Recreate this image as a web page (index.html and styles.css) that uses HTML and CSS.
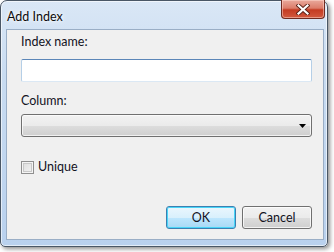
FILE: index.html
```html
<!DOCTYPE html>
<html>
<head>
<meta charset="utf-8">
<link rel="stylesheet" href="styles.css">
</head>
<body>
<div class="window">
  <div class="titlebar">
    <span class="title">Add Index</span>
    <div class="close">
      <svg width="14" height="11" viewBox="0 0 14 11">
        <path d="M2.5 1.5 L11.5 9.5 M11.5 1.5 L2.5 9.5" stroke="#5a2218" stroke-width="4" stroke-linecap="square"/>
        <path d="M2.5 1.5 L11.5 9.5 M11.5 1.5 L2.5 9.5" stroke="#ffffff" stroke-width="2.2" stroke-linecap="square"/>
      </svg>
    </div>
  </div>
  <div class="client">
    <div class="label first">Index name:</div>
    <div class="input"></div>
    <div class="label second">Column:</div>
    <div class="select">
      <svg class="arrow" width="7" height="4" viewBox="0 0 7 4"><path d="M0 0 H7 L3.5 4 Z" fill="#000"/></svg>
    </div>
    <div class="check-row">
      <span class="checkbox"></span>
      <span class="check-label">Unique</span>
    </div>
    <div class="buttons">
      <div class="btn btn-default">OK</div>
      <div class="btn">Cancel</div>
    </div>
  </div>
</div>
</body>
</html>
```
FILE: styles.css
```css
html, body {
  margin: 0;
  padding: 0;
  background: #ffffff;
}
body {
  width: 334px;
  height: 252px;
  overflow: hidden;
  font-family: Lato, "Noto Sans", sans-serif;
  font-size: 12.5px;
  color: #12121e;
}
.window {
  box-sizing: border-box;
  width: 328px;
  height: 247px;
  border: 1px solid #4a5766;
  border-radius: 7px 7px 5px 5px;
  background: linear-gradient(to bottom, #dae7f6 0%, #c9dcf1 30%, #b9d1ee 100%);
  box-shadow: 2px 2px 4px rgba(0, 0, 0, 0.45), inset 0 0 0 1px rgba(255, 255, 255, 0.6);
  display: flex;
  flex-direction: column;
}
.titlebar {
  height: 28px;
  display: flex;
  align-items: flex-start;
  padding-left: 6px;
}
.title {
  margin-top: 8px;
  line-height: 16px;
  color: #0c0c0c;
  text-shadow: 0 0 6px #ffffff, 0 0 3px #ffffff;
}
.close {
  margin-left: auto;
  margin-right: 2px;
  margin-top: -1px;
  width: 44px;
  height: 19px;
  box-sizing: border-box;
  border: 1px solid #6f2b21;
  border-top: none;
  border-radius: 0 0 4px 4px;
  background: linear-gradient(to bottom, #e9a99c 0%, #dc7d6a 45%, #c43b22 55%, #d2593f 100%);
  box-shadow: inset 0 0 0 1px rgba(255, 220, 210, 0.5);
  display: flex;
  align-items: center;
  justify-content: center;
}
.client {
  flex: 1;
  margin: 0 3px 6px 5px;
  border: 1px solid #9aaec6;
  background: #f0f0f0;
  display: flex;
  flex-direction: column;
  padding: 0 11px 10px 14px;
}
.label {
  line-height: 16px;
}
.label.first {
  margin-top: 4px;
}
.label.second {
  margin-top: 11px;
}
.input {
  margin-top: 9px;
  height: 23px;
  box-sizing: border-box;
  background: #ffffff;
  border: 1px solid #b5cfe7;
  border-top-color: #5b86b8;
  border-bottom-color: #dbe8f4;
  border-radius: 2px;
}
.select {
  margin-top: 5px;
  height: 23px;
  box-sizing: border-box;
  border: 1px solid #707070;
  border-radius: 3px;
  background: linear-gradient(to bottom, #f2f2f2 0%, #ebebeb 50%, #dddddd 51%, #cfcfcf 100%);
  box-shadow: inset 0 0 0 1px rgba(255, 255, 255, 0.7);
  display: flex;
  align-items: center;
  justify-content: flex-end;
  padding-right: 5px;
}
.check-row {
  margin-top: 22px;
  display: flex;
  align-items: center;
  line-height: 16px;
}
.checkbox {
  width: 13px;
  height: 13px;
  box-sizing: border-box;
  border: 1px solid #8f8f8f;
  background: linear-gradient(135deg, #dcdcdc 0%, #f4f4f4 100%);
  box-shadow: inset 0 0 0 1px #f4f4f4, inset 0 0 0 2px #c8c8c8;
  margin-right: 4px;
}
.buttons {
  margin-top: auto;
  display: flex;
  justify-content: flex-end;
  gap: 6px;
}
.btn {
  width: 70px;
  height: 23px;
  box-sizing: border-box;
  border: 1px solid #707070;
  border-radius: 3px;
  background: linear-gradient(to bottom, #f2f2f2 0%, #ebebeb 50%, #dddddd 51%, #cfcfcf 100%);
  box-shadow: inset 0 0 0 1px rgba(255, 255, 255, 0.75);
  display: flex;
  align-items: center;
  justify-content: center;
  line-height: 16px;
}
.btn-default {
  border-color: #3c7fb1;
  background: linear-gradient(to bottom, #eaf6fd 0%, #d9f0fc 50%, #bee6fd 51%, #a7d9f5 100%);
  box-shadow: inset 0 0 0 1px #48d5f7;
}
```
